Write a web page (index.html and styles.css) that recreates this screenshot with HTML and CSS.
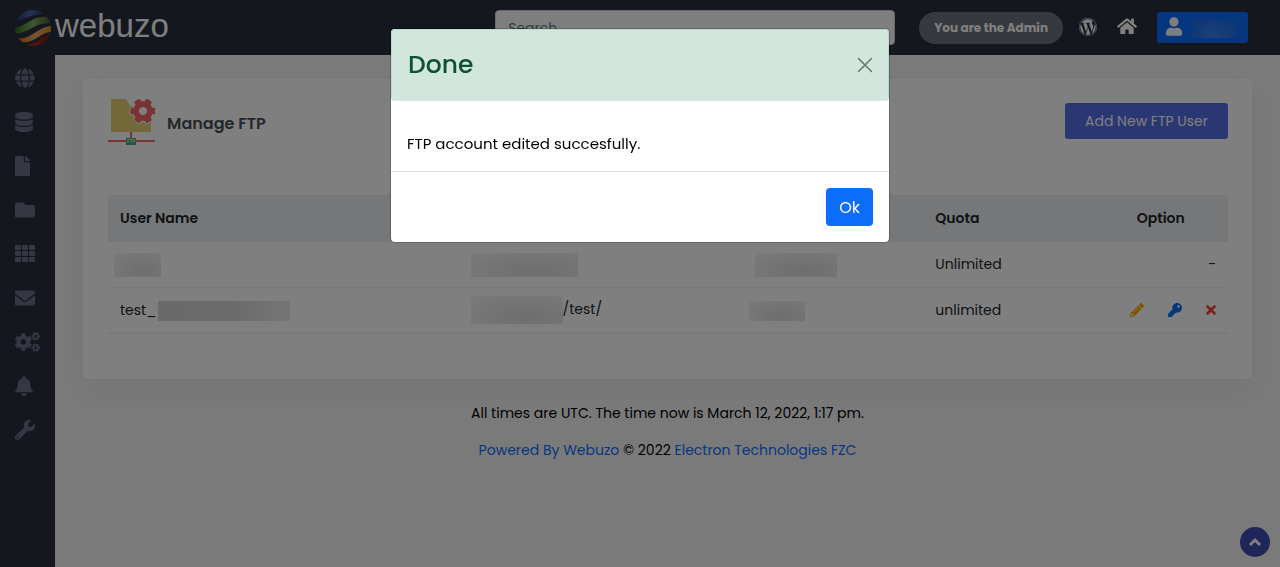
FILE: index.html
```html
<!DOCTYPE html>
<html lang="en">
<head>
  <meta charset="UTF-8">
  <title>Manage FTP - Webuzo</title>
  <meta name="viewport" content="width=device-width, initial-scale=1.0">
  <link rel="stylesheet" href="styles.css">
</head>
<body>
  <header class="topbar">
    <a class="logo" href="#" aria-label="webuzo">
      <svg width="38" height="38" viewBox="0 0 38 38">
        <defs>
          <clipPath id="ball"><circle cx="19" cy="19" r="18"/></clipPath>
          <linearGradient id="blue" x1="0" x2="1"><stop offset="0" stop-color="#24407e"/><stop offset=".5" stop-color="#4c669c"/><stop offset="1" stop-color="#24407e"/></linearGradient>
          <linearGradient id="green" x1="0" x2="1"><stop offset="0" stop-color="#2c6a1c"/><stop offset=".5" stop-color="#84a868"/><stop offset="1" stop-color="#2f5c1c"/></linearGradient>
          <linearGradient id="orange" x1="0" x2="1"><stop offset="0" stop-color="#d8641c"/><stop offset=".5" stop-color="#e8ac5c"/><stop offset="1" stop-color="#d88c2c"/></linearGradient>
          <linearGradient id="red" x1="0" x2="1"><stop offset="0" stop-color="#b03020"/><stop offset="1" stop-color="#8c1414"/></linearGradient>
        </defs>
        <g clip-path="url(#ball)">
          <path fill="url(#blue)" d="M3 11C11 11 16 5 29 5L24 0H8z"/>
          <path fill="url(#green)" d="M0 19C11 18 19 6 33 8L38 15C23 11 14 26 1 24z"/>
          <path fill="url(#orange)" d="M4 29C16 32 24 17 38 17V23C28 22 20 35 8 33z"/>
          <path fill="url(#red)" d="M12 36C22 36 28 27 37 25L32 38H14z"/>
        </g>
      </svg>
      <span>webuzo</span>
    </a>
    <div class="topbar-right">
      <input class="search" type="search" placeholder="Search" aria-label="Search">
      <span class="badge">You are the Admin</span>
      <a class="top-icon" href="#" aria-label="WordPress"><svg width="18" height="18" viewBox="8 8 496 496"><path d="M61.7 169.4l101.5 278C92.2 413 43.3 340.2 43.3 256c0-30.9 6.6-60.1 18.4-86.6zm337.9 75.9c0-26.3-9.4-44.5-17.5-58.7-10.8-17.5-20.9-32.4-20.9-49.9 0-19.6 14.8-37.8 35.7-37.8.9 0 1.8.1 2.8.2-37.9-34.7-88.3-55.9-143.7-55.9-74.3 0-139.7 38.1-177.8 95.9 5 .2 9.7.3 13.7.3 22.2 0 56.7-2.7 56.7-2.7 11.5-.7 12.8 16.2 1.4 17.5 0 0-11.5 1.3-24.3 2l77.5 230.4L249.8 247l-33.1-90.8c-11.5-.7-22.3-2-22.3-2-11.5-.7-10.1-18.2 1.3-17.5 0 0 35.1 2.7 56 2.7 22.2 0 56.7-2.7 56.7-2.7 11.5-.7 12.8 16.2 1.4 17.5 0 0-11.5 1.3-24.3 2l76.9 228.7 21.2-70.9c9-29.4 16-50.5 16-68.7zm-139.9 29.3l-63.8 185.5c19.1 5.6 39.2 8.7 60.1 8.7 24.8 0 48.5-4.3 70.6-12.1-.6-.9-1.1-1.9-1.5-2.9l-65.4-179.2zm183-120.7c.9 6.8 1.4 14 1.4 21.9 0 21.6-4 45.8-16.2 76.2l-65 187.9C426.2 403 468.7 334.5 468.7 256c0-37-9.4-71.8-26-102.1zM504 256c0 136.8-111.3 248-248 248C119.2 504 8 392.7 8 256 8 119.2 119.2 8 256 8c136.7 0 248 111.2 248 248zm-11.4 0c0-130.5-106.2-236.6-236.6-236.6C125.5 19.4 19.4 125.5 19.4 256S125.6 492.6 256 492.6c130.5 0 236.6-106.1 236.6-236.6z"/></svg></a>
      <a class="top-icon" href="#" aria-label="Home"><svg width="20" height="20" viewBox="0 24 576 512"><path d="M280.37 148.26L96 300.11V464a16 16 0 0 0 16 16l112.06-.29a16 16 0 0 0 15.92-16V368a16 16 0 0 1 16-16h64a16 16 0 0 1 16 16v95.64a16 16 0 0 0 16 16.05L464 480a16 16 0 0 0 16-16V300L295.67 148.26a12.19 12.19 0 0 0-15.3 0zM571.6 251.47L488 182.56V44.05a12 12 0 0 0-12-12h-56a12 12 0 0 0-12 12v72.61L318.47 43a48 48 0 0 0-61 0L4.34 251.47a12 12 0 0 0-1.6 16.9l25.5 31A12 12 0 0 0 45.15 301l235.22-193.74a12.19 12.19 0 0 1 15.3 0L530.9 301a12 12 0 0 0 16.9-1.6l25.5-31a12 12 0 0 0-1.7-16.93z"/></svg></a>
      <button class="user-btn" type="button" aria-label="Account">
        <svg width="16" height="19" viewBox="0 0 448 512"><path d="M224 256c70.7 0 128-57.3 128-128S294.7 0 224 0 96 57.3 96 128s57.3 128 128 128zm89.6 32h-16.7c-22.2 10.2-46.9 16-72.9 16s-50.6-5.8-72.9-16h-16.7C60.2 288 0 348.2 0 422.4V464c0 26.5 21.5 48 48 48h352c26.5 0 48-21.5 48-48v-41.6c0-74.2-60.2-134.4-134.4-134.4z"/></svg>
        <span class="user-mask"></span>
      </button>
    </div>
  </header>

  <div class="layout">
    <nav class="sidebar">
      <a href="#" aria-label="Domains"><svg width="20" height="20" viewBox="0 0 496 512"><path d="M336.5 160C322 70.7 287.8 8 248 8s-74 62.7-88.5 152h177zM152 256c0 22.2 1.2 43.5 3.3 64h185.3c2.1-20.5 3.3-41.8 3.3-64s-1.2-43.5-3.3-64H155.3c-2.1 20.5-3.3 41.8-3.3 64zm324.7-96c-28.6-67.9-86.5-120.4-158-141.6 24.4 33.8 41.2 84.7 50 141.6h108zM177.2 18.4C105.8 39.6 47.8 92.1 19.3 160h108c8.7-56.9 25.5-107.8 49.9-141.6zM487.4 192H372.7c2.1 21 3.3 42.5 3.3 64s-1.2 43-3.3 64h114.6c5.5-20.5 8.6-41.8 8.6-64s-3.1-43.5-8.5-64zM120 256c0-21.5 1.2-43 3.3-64H8.6C3.2 212.5 0 233.8 0 256s3.2 43.5 8.6 64h114.6c-2-21-3.2-42.5-3.2-64zm39.5 96c14.5 89.3 48.7 152 88.5 152s74-62.7 88.5-152h-177zm159.3 141.6c71.4-21.2 129.4-73.7 158-141.6h-108c-8.8 56.9-25.6 107.8-50 141.6zM19.3 352c28.6 67.9 86.5 120.4 158 141.6-24.4-33.8-41.2-84.7-50-141.6h-108z"/></svg></a>
      <a href="#" aria-label="Database"><svg width="18" height="20" viewBox="0 0 448 512"><path d="M448 73.143v45.714C448 159.143 347.667 192 224 192S0 159.143 0 118.857V73.143C0 32.857 100.333 0 224 0s224 32.857 224 73.143zM448 176v102.857C448 319.143 347.667 352 224 352S0 319.143 0 278.857V176c48.125 33.143 136.208 48.572 224 48.572S399.874 209.143 448 176zm0 160v102.857C448 479.143 347.667 512 224 512S0 479.143 0 438.857V336c48.125 33.143 136.208 48.572 224 48.572S399.874 369.143 448 336z"/></svg></a>
      <a href="#" aria-label="FTP"><svg width="15" height="20" viewBox="0 0 384 512"><path d="M224 136V0H24C10.7 0 0 10.7 0 24v464c0 13.3 10.7 24 24 24h336c13.3 0 24-10.7 24-24V160H248c-13.2 0-24-10.8-24-24zm160-14.1v6.1H256V0h6.1c6.4 0 12.5 2.5 17 7l97.9 98c4.5 4.5 7 10.6 7 16.9z"/></svg></a>
      <a href="#" aria-label="Files"><svg width="20" height="20" viewBox="0 0 512 512"><path d="M464 128H272l-64-64H48C21.49 64 0 85.49 0 112v288c0 26.51 21.49 48 48 48h416c26.51 0 48-21.49 48-48V176c0-26.51-21.49-48-48-48z"/></svg></a>
      <a href="#" aria-label="Apps"><svg width="20" height="20" viewBox="0 0 20 20"><rect y="1" width="6" height="5" rx="1"/><rect x="7" y="1" width="6" height="5" rx="1"/><rect x="14" y="1" width="6" height="5" rx="1"/><rect y="7" width="6" height="5" rx="1"/><rect x="7" y="7" width="6" height="5" rx="1"/><rect x="14" y="7" width="6" height="5" rx="1"/><rect y="13" width="6" height="5" rx="1"/><rect x="7" y="13" width="6" height="5" rx="1"/><rect x="14" y="13" width="6" height="5" rx="1"/></svg></a>
      <a href="#" aria-label="Email"><svg width="20" height="20" viewBox="0 0 512 512"><path d="M502.3 190.8c3.9-3.1 9.7-.2 9.7 4.7V400c0 26.5-21.5 48-48 48H48c-26.5 0-48-21.5-48-48V195.6c0-5 5.7-7.8 9.7-4.7 22.4 17.4 52.1 39.5 154.1 113.6 21.1 15.4 56.7 47.8 92.2 47.6 35.7.3 72-32.8 92.3-47.6 102-74.1 131.6-96.3 154-113.7zM256 320c23.2.4 56.6-29.2 73.4-41.4 132.7-96.3 142.8-104.7 173.4-128.7 5.8-4.5 9.2-11.5 9.2-18.9v-19c0-26.5-21.5-48-48-48H48c-26.5 0-48 21.5-48 48v19c0 7.4 3.4 14.3 9.2 18.9 30.6 23.9 40.7 32.4 173.4 128.7 16.8 12.2 50.2 41.8 73.4 41.4z"/></svg></a>
      <a href="#" aria-label="Configuration"><svg width="25" height="20" viewBox="0 0 640 512">
        <defs><path id="cog" d="M487.4 315.7l-42.6-24.6c4.3-23.2 4.3-47 0-70.2l42.6-24.6c4.9-2.8 7.1-8.6 5.5-14-11.1-35.6-30-67.8-54.7-94.6-3.8-4.1-10-5.1-14.8-2.3L380.8 110c-17.9-15.4-38.5-27.3-60.8-35.1V25.8c0-5.6-3.9-10.5-9.4-11.7-36.7-8.2-74.3-7.8-109.2 0-5.5 1.2-9.4 6.1-9.4 11.7V75c-22.2 7.9-42.8 19.8-60.8 35.1L88.7 85.5c-4.9-2.8-11-1.9-14.8 2.3-24.7 26.7-43.6 58.9-54.7 94.6-1.7 5.4.6 11.2 5.5 14L67.3 221c-4.3 23.2-4.3 47 0 70.2l-42.6 24.6c-4.9 2.8-7.1 8.6-5.5 14 11.1 35.6 30 67.8 54.7 94.6 3.8 4.1 10 5.1 14.8 2.3l42.6-24.6c17.9 15.4 38.5 27.3 60.8 35.1v49.2c0 5.6 3.9 10.5 9.4 11.7 36.7 8.2 74.3 7.8 109.2 0 5.5-1.2 9.4-6.1 9.4-11.7v-49.2c22.2-7.9 42.8-19.8 60.8-35.1l42.6 24.6c4.9 2.8 11 1.9 14.8-2.3 24.7-26.7 43.6-58.9 54.7-94.6 1.5-5.5-.7-11.3-5.6-14.1zM256 336c-44.1 0-80-35.9-80-80s35.9-80 80-80 80 35.9 80 80-35.9 80-80 80z"/></defs>
        <use href="#cog" transform="translate(-16 26) scale(.9)"/>
        <use href="#cog" transform="translate(530 110) rotate(30) scale(.44) translate(-256 -256)"/>
        <use href="#cog" transform="translate(530 402) rotate(30) scale(.44) translate(-256 -256)"/>
      </svg></a>
      <a href="#" aria-label="Notifications"><svg width="18" height="20" viewBox="0 0 448 512"><path d="M224 512c35.32 0 63.97-28.65 63.97-64H160.03c0 35.35 28.65 64 63.97 64zm215.39-149.71c-19.32-20.76-55.47-51.99-55.47-154.29 0-77.7-54.48-139.9-127.94-155.16V32c0-17.67-14.32-32-31.98-32s-31.98 14.33-31.98 32v20.84C118.56 68.1 64.08 130.3 64.08 208c0 102.3-36.15 133.53-55.47 154.29-6 6.45-8.66 14.16-8.61 21.71.11 16.4 12.98 32 32.1 32h383.8c19.12 0 32-15.6 32.1-32 .05-7.55-2.61-15.27-8.61-21.71z"/></svg></a>
      <a href="#" aria-label="Tools"><svg width="20" height="20" viewBox="0 0 512 512"><path d="M507.73 109.1c-2.24-9.03-13.54-12.09-20.12-5.51l-74.36 74.36-67.88-11.31-11.31-67.88 74.36-74.36c6.62-6.62 3.43-17.9-5.66-20.16-47.38-11.74-99.55.91-136.58 37.93-39.64 39.64-50.55 97.1-34.05 147.2L18.74 402.76c-24.99 24.99-24.99 65.51 0 90.5 24.99 24.99 65.51 24.99 90.5 0l213.21-213.21c50.12 16.71 107.47 5.68 147.37-34.22 37.07-37.07 49.7-89.32 37.91-136.73zM64 472c-13.25 0-24-10.75-24-24 0-13.26 10.75-24 24-24s24 10.74 24 24c0 13.25-10.75 24-24 24z"/></svg></a>
    </nav>

    <main class="content">
      <section class="card">
        <div class="card-head">
          <svg width="47" height="48" viewBox="0 0 47 48">
            <path fill="#e8d070" d="M3 2h15l4 7h21v26H3z"/>
            <path fill="#f56464" d="M22 35h2v6h-2zM0 43h47v2H0z"/>
            <circle cx="35" cy="14" r="9" fill="#fff"/>
            <use class="gear" href="#cog" transform="translate(35 14) rotate(30) scale(.051) translate(-256 -256)"/>
            <rect x="18" y="41" width="10" height="7" fill="#43a878"/>
            <text class="ftp-tag" x="23" y="46" text-anchor="middle">FTP</text>
          </svg>
          <h1>Manage FTP</h1>
          <button class="btn-add" type="button">Add New FTP User</button>
        </div>

        <table class="ftp-table">
          <colgroup>
            <col class="col-user">
            <col class="col-path">
            <col class="col-size">
            <col>
            <col class="col-option">
          </colgroup>
          <thead>
            <tr>
              <th>User Name</th>
              <th></th>
              <th></th>
              <th>Quota</th>
              <th class="option">Option</th>
            </tr>
          </thead>
          <tbody>
            <tr>
              <td><span class="mask mask-xs mask-out"></span></td>
              <td><span class="mask mask-lg"></span></td>
              <td><span class="mask mask-md"></span></td>
              <td>Unlimited</td>
              <td><div class="actions">-</div></td>
            </tr>
            <tr>
              <td>test_<span class="mask mask-xl"></span></td>
              <td><span class="mask mask-path"></span>/test/</td>
              <td><span class="mask mask-sm mask-out"></span></td>
              <td>unlimited</td>
              <td>
                <div class="actions">
                  <a class="edit" href="#" aria-label="Edit"><svg width="14" height="14" viewBox="0 0 512 512"><path d="M497.9 142.1l-46.1 46.1c-4.7 4.7-12.3 4.7-17 0l-111-111c-4.7-4.7-4.7-12.3 0-17l46.1-46.1c18.7-18.7 49.1-18.7 67.9 0l60.1 60.1c18.8 18.7 18.8 49.1 0 67.9zM284.2 99.8L21.6 362.4.4 483.9c-2.9 16.4 11.4 30.6 27.8 27.8l121.5-21.3 262.6-262.6c4.7-4.7 4.7-12.3 0-17l-111-111c-4.8-4.7-12.4-4.7-17.1 0zM124.1 339.9c-5.5-5.5-5.5-14.3 0-19.8l154-154c5.5-5.5 14.3-5.5 19.8 0s5.5 14.3 0 19.8l-154 154c-5.5 5.5-14.3 5.5-19.8 0zM88 424h48v36.3l-64.5 11.3-31.1-31.1L51.7 376H88v48z"/></svg></a>
                  <a class="key" href="#" aria-label="Change password"><svg width="14" height="14" viewBox="0 0 512 512"><path d="M512 176.001C512 273.203 433.202 352 336 352c-11.22 0-22.19-1.062-32.827-3.069l-24.012 27.014A23.999 23.999 0 0 1 261.223 384H224v40c0 13.255-10.745 24-24 24h-40v40c0 13.255-10.745 24-24 24H24c-13.255 0-24-10.745-24-24v-78.059c0-6.365 2.529-12.47 7.029-16.971l161.802-161.802C163.108 213.814 160 195.271 160 176 160 78.798 238.797.001 335.999 0 433.488-.001 512 78.511 512 176.001zM336 128c0 26.51 21.49 48 48 48s48-21.49 48-48-21.49-48-48-48-48 21.49-48 48z"/></svg></a>
                  <a class="delete" href="#" aria-label="Delete"><svg width="10" height="14" viewBox="0 0 10 14"><path d="M1.5 3.5l7 7M8.5 3.5l-7 7" stroke="currentColor" stroke-width="2.6" stroke-linecap="round"/></svg></a>
                </div>
              </td>
            </tr>
          </tbody>
        </table>
      </section>

      <footer class="footer">
        <p>All times are UTC. The time now is March 12, 2022, 1:17 pm.</p>
        <p><a href="#">Powered By Webuzo</a> © 2022 <a href="#">Electron Technologies FZC</a></p>
      </footer>
    </main>
  </div>

  <button class="to-top" type="button" aria-label="Back to top">
    <svg width="14" height="10" viewBox="0 0 14 10"><path d="M2 8l5-5 5 5" fill="none" stroke="currentColor" stroke-width="3"/></svg>
  </button>

  <!-- Result dialog -->
  <div class="backdrop">
    <div class="modal" role="dialog" aria-modal="true" aria-labelledby="modalTitle">
      <div class="modal-header">
        <h2 id="modalTitle">Done</h2>
        <button class="btn-close" type="button" aria-label="Close">
          <svg width="16" height="16" viewBox="0 0 16 16"><path d="M1.5 1.5l13 13M14.5 1.5l-13 13" stroke="currentColor" stroke-width="1.5" stroke-linecap="round"/></svg>
        </button>
      </div>
      <div class="modal-body">FTP account edited succesfully.</div>
      <div class="modal-footer">
        <button class="btn-ok" type="button">Ok</button>
      </div>
    </div>
  </div>
</body>
</html>
```
FILE: styles.css
```css
* {
  box-sizing: border-box;
}

body {
  margin: 0;
  min-height: 100vh;
  display: flex;
  flex-direction: column;
  background: #f5f5f5;
  color: #000;
  font-family: Poppins, Inter, sans-serif;
  font-size: 14px;
  line-height: 21px;
}

a {
  color: #0d6efd;
  text-decoration: none;
}

button,
input {
  font-family: inherit;
}

button {
  border: none;
  cursor: pointer;
}

svg {
  display: block;
  flex: none;
  fill: currentColor;
}

/* Top bar */
.topbar {
  display: flex;
  justify-content: space-between;
  align-items: center;
  height: 55px;
  padding: 0 32px 0 14px;
  background: #2a2e3e;
}

.logo {
  display: flex;
  align-items: center;
  gap: 3px;
  color: #fff;
  font-family: "Liberation Sans", Arial, sans-serif;
  font-size: 33px;
  line-height: 32px;
}

.logo span {
  padding-bottom: 4px;
}

.topbar-right {
  display: flex;
  align-items: center;
  gap: 20px;
}

.search {
  width: 400px;
  height: 35px;
  margin-right: 4px;
  padding: 1px 12px 0;
  border: 1px solid #ced4da;
  border-radius: 4px;
  background: #fff;
  font-size: 14px;
}

.search::placeholder {
  color: #6c757d;
}

.badge {
  padding: 6px 15px;
  margin-right: -4px;
  border-radius: 16px;
  background: #6c757d;
  color: #fff;
  font-size: 12px;
  font-weight: 700;
  line-height: 20px;
}

.top-icon {
  padding-bottom: 2px;
  color: #fff;
}

.user-btn {
  display: flex;
  align-items: center;
  gap: 10px;
  height: 31px;
  padding: 0 11px 2px 9px;
  border-radius: 3px;
  background: #0d6efd;
  color: #fff;
}

.user-mask {
  width: 45px;
  height: 18px;
  margin-top: 4px;
  background: radial-gradient(ellipse at 50% 90%, #3a80ee, #1a6cec);
}

/* Sidebar */
.layout {
  display: flex;
  flex: 1;
}

.sidebar {
  flex: none;
  width: 55px;
  background: #2a2e3e;
}

.sidebar a {
  display: flex;
  align-items: center;
  height: 44px;
  padding: 1px 0 0 15px;
  color: #6a7187;
}

/* Content */
.content {
  flex: 1;
  min-width: 0;
  padding: 24px 28px;
}

.card {
  padding: 18px 24px 45px 25px;
  border-radius: 5px;
  background: #fff;
  box-shadow: 0 12px 30px rgba(18, 38, 99, 0.06);
}

.card-head {
  display: flex;
  align-items: center;
  gap: 12px;
  margin-bottom: 50px;
}

.card-head h1 {
  flex: 1;
  margin: 0;
  padding-top: 4px;
  color: #495057;
  font-size: 16px;
  font-weight: 600;
}

.gear {
  fill: #f56464;
  stroke: #fff;
  stroke-width: 40px;
  paint-order: stroke;
}

.ftp-tag {
  fill: #fff;
  font-size: 5px;
}

.btn-add {
  height: 36px;
  padding: 0 20px;
  border-radius: 3px;
  background: #556ee6;
  color: #fff;
  font-size: 14px;
}

.ftp-table {
  width: 100%;
  table-layout: fixed;
  border-collapse: collapse;
  border-bottom: 2px solid #eff2f7;
}

.col-user { width: 31.3%; }
.col-path { width: 25.4%; }
.col-size { width: 16.1%; }
.col-option { width: 12%; }

.ftp-table th,
.ftp-table td {
  height: 46px;
  padding: 1px 12px 0;
  border-bottom: 1px solid #eff2f7;
  color: #212529;
  text-align: left;
  white-space: nowrap;
}

.ftp-table th {
  background: #eaeef2;
  font-weight: 600;
}

.ftp-table .option {
  text-align: center;
}

.actions {
  display: flex;
  justify-content: flex-end;
  gap: 24px;
}

.edit { color: #ffa500; }
.key { color: #0d6efd; }
.delete { color: #f44336; }

/* Hidden account details */
.mask {
  display: inline-block;
  height: 24px;
  vertical-align: middle;
  background: radial-gradient(ellipse at 60% 75%, #dcdcdc, #f5f5f5);
}

.mask-out { margin-left: -6px; }
.mask-xs { width: 47px; }
.mask-sm { width: 56px; height: 20px; }
.mask-md { width: 82px; }
.mask-path { width: 92px; height: 28px; }
.mask-lg { width: 107px; }

.mask-xl {
  width: 132px;
  height: 20px;
  margin-left: 2px;
  background: linear-gradient(to right, #d4d4d4, #d8d8d8 60%, #ececec);
}

.footer {
  margin-top: 24px;
  text-align: center;
}

.footer p {
  margin: 0 0 16px;
}

.to-top {
  position: fixed;
  right: 10px;
  bottom: 10px;
  display: flex;
  justify-content: center;
  align-items: center;
  width: 30px;
  height: 30px;
  padding: 0;
  border-radius: 50%;
  background: #3f4fb5;
  color: #fff;
}

/* Modal */
.backdrop {
  position: fixed;
  inset: 0;
  display: flex;
  justify-content: center;
  align-items: flex-start;
  padding-top: 28px;
  background: rgba(0, 0, 0, 0.5);
}

.modal {
  width: 100%;
  max-width: 500px;
  border: 1px solid rgba(0, 0, 0, 0.2);
  border-radius: 5px;
  background: #fff;
  background-clip: padding-box;
  color: #000;
  font-size: 15px;
  line-height: 24px;
}

.modal-header {
  display: flex;
  justify-content: space-between;
  align-items: center;
  height: 72px;
  padding: 0 15px 0 16px;
  border: 1px solid #badbcc;
  border-bottom-color: #dee2e6;
  border-radius: 4px;
  background: #d1e7dd;
  color: #0f5132;
}

.modal-header h2 {
  margin: 0;
  font-size: 25px;
  font-weight: 500;
}

.btn-close {
  padding: 0;
  background: none;
  color: #000;
  opacity: 0.5;
}

.modal-body {
  padding: 31px 16px 15px;
}

.modal-footer {
  display: flex;
  justify-content: flex-end;
  padding: 16px;
  border-top: 1px solid #dee2e6;
}

.btn-ok {
  height: 38px;
  padding: 0 13px;
  border-radius: 4px;
  background: #0d6efd;
  color: #fff;
  font-size: 16px;
}
```
